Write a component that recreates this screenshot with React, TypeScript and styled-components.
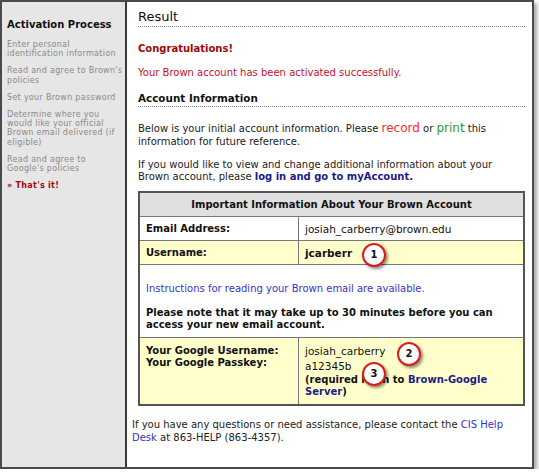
import React from 'react'
import styled, { createGlobalStyle } from 'styled-components'

const GlobalStyle = createGlobalStyle`
  html, body {
    margin: 0;
    padding: 0;
    background: #ffffff;
  }
  body {
    font-family: "DejaVu Sans", Verdana, sans-serif;
  }
`

const Frame = styled.div`
  display: flex;
  width: 534px;
  height: 469px;
  box-sizing: border-box;
  border: 2px solid #4a4a4a;
  box-shadow: 3px 3px 4px rgba(0, 0, 0, 0.35);
  overflow: hidden;
`

const Sidebar = styled.nav`
  flex: none;
  width: 125px;
  box-sizing: border-box;
  background: #e6e6e6;
  border-right: 2px solid #3a3a3a;
  padding: 16px 0 0 5px;
`

const SideTitle = styled.h3`
  margin: 0 0 9px;
  font-size: 10px;
  line-height: 13px;
  font-weight: bold;
  color: #111;
`

const SideStep = styled.div<{ $current?: boolean }>`
  margin-bottom: 7.5px;
  font-size: 8px;
  line-height: 9.4px;
  letter-spacing: 0.3px;
  color: ${({ $current }) => ($current ? '#9b0a0a' : '#8a8a8a')};
  font-weight: ${({ $current }) => ($current ? 'bold' : 'normal')};
`

const Main = styled.main`
  flex: 1;
  padding: 7px 7px 0 11px;
  color: #222;
  font-size: 10px;
`

const PageTitle = styled.h1`
  margin: 0;
  padding-bottom: 1px;
  font-size: 13px;
  line-height: 16px;
  font-weight: normal;
  color: #111;
  border-bottom: 1px dotted #8a8a8a;
`

const SectionTitle = styled.h2`
  margin: 13px 0 0;
  padding-bottom: 1px;
  font-size: 10.4px;
  line-height: 13px;
  font-weight: bold;
  color: #111;
  border-bottom: 1px dotted #8a8a8a;
`

const Para = styled.p<{ $mt: number; $lh?: number; $color?: string; $bold?: boolean }>`
  margin: ${({ $mt }) => $mt}px 0 0;
  line-height: ${({ $lh }) => $lh ?? 12}px;
  color: ${({ $color }) => $color ?? '#222'};
  font-weight: ${({ $bold }) => ($bold ? 'bold' : 'normal')};
`

const BigWord = styled.span<{ $color: string }>`
  font-size: 12px;
  color: ${({ $color }) => $color};
`

const Link = styled.a<{ $bold?: boolean }>`
  color: ${({ $bold }) => ($bold ? '#1c1c8c' : '#3333bb')};
  font-weight: ${({ $bold }) => ($bold ? 'bold' : 'normal')};
  text-decoration: none;
`

const InfoTable = styled.table`
  width: 100%;
  margin-top: 8px;
  border-collapse: collapse;
  border: 2px solid #555;
  font-size: 10px;
  color: #111;
`

const HeadCell = styled.th`
  height: 23px;
  padding: 0;
  background: #e0e0e0;
  border: 1px solid #777;
  font-weight: bold;
  text-align: center;
`

const Row = styled.tr<{ $yellow?: boolean }>`
  background: ${({ $yellow }) => ($yellow ? '#ffffcc' : '#ffffff')};
`

const LabelCell = styled.td<{ $top?: boolean }>`
  width: 146px;
  height: 23px;
  padding: ${({ $top }) => ($top ? '7px 6px 0' : '0 6px')};
  vertical-align: ${({ $top }) => ($top ? 'top' : 'middle')};
  border: 1px solid #777;
  font-weight: bold;
  line-height: 12px;
`

const ValueCell = styled.td<{ $top?: boolean }>`
  position: relative;
  padding: ${({ $top }) => ($top ? '5px 6px 7px' : '0 6px')};
  vertical-align: ${({ $top }) => ($top ? 'top' : 'middle')};
  border: 1px solid #777;
  line-height: 12px;
`

const WideCell = styled.td`
  padding: 18px 6px 7px;
  border: 1px solid #777;
`

const ValueText = styled.div<{ $bold?: boolean; $lh?: number }>`
  font-size: 10.5px;
  line-height: ${({ $lh }) => $lh ?? 12}px;
  font-weight: ${({ $bold }) => ($bold ? 'bold' : 'normal')};
`

const Note = styled.div`
  font-weight: bold;
  line-height: 11.5px;
`

const Marker = styled.span<{ $left: number; $top: number }>`
  position: absolute;
  left: ${({ $left }) => $left}px;
  top: ${({ $top }) => $top}px;
  width: 20px;
  height: 20px;
  border: 2.5px solid #e01b1b;
  border-radius: 50%;
  background: #ffffff;
  box-shadow: 2px 2px 3px rgba(0, 0, 0, 0.45);
  display: flex;
  align-items: center;
  justify-content: center;
  font-size: 10px;
  font-weight: bold;
  color: #111;
`

const Footer = styled.p`
  margin: 12px 0 0 -6px;
  line-height: 13px;
  color: #222;
`

const steps = [
  'Enter personal identification information',
  "Read and agree to Brown's policies",
  'Set your Brown password',
  'Determine where you would like your official Brown email delivered (if eligible)',
  "Read and agree to Google's policies",
]

export default function App() {
  return (
    <>
      <GlobalStyle />
      <Frame>
        <Sidebar>
          <SideTitle>Activation Process</SideTitle>
          {steps.map((s) => (
            <SideStep key={s}>{s}</SideStep>
          ))}
          <SideStep $current>» That's it!</SideStep>
        </Sidebar>
        <Main>
          <PageTitle>Result</PageTitle>
          <Para $mt={16} $color="#9b0a0a" $bold>
            Congratulations!
          </Para>
          <Para $mt={12} $color="#c4122b">
            Your Brown account has been activated successfully.
          </Para>
          <SectionTitle>Account Information</SectionTitle>
          <Para $mt={15} $lh={13}>
            Below is your initial account information. Please <BigWord $color="#ff2a2a">record</BigWord> or{' '}
            <BigWord $color="#2e9a2e">print</BigWord> this information for future reference.
          </Para>
          <Para $mt={11}>
            If you would like to view and change additional information about your Brown account, please{' '}
            <Link $bold>log in and go to myAccount.</Link>
          </Para>
          <InfoTable>
            <thead>
              <tr>
                <HeadCell colSpan={2}>Important Information About Your Brown Account</HeadCell>
              </tr>
            </thead>
            <tbody>
              <Row>
                <LabelCell>Email Address:</LabelCell>
                <ValueCell>
                  <ValueText>josiah_carberry@brown.edu</ValueText>
                </ValueCell>
              </Row>
              <Row $yellow>
                <LabelCell>Username:</LabelCell>
                <ValueCell>
                  <ValueText $bold>jcarberr</ValueText>
                  <Marker $left={63} $top={2}>1</Marker>
                </ValueCell>
              </Row>
              <Row>
                <WideCell colSpan={2}>
                  <Para $mt={0} $color="#3535c8">
                    Instructions for reading your Brown email are available.
                  </Para>
                  <Para $mt={12} $lh={11.5} $bold $color="#111">
                    Please note that it may take up to 30 minutes before you can access your new email account.
                  </Para>
                </WideCell>
              </Row>
              <Row $yellow>
                <LabelCell $top>
                  Your Google Username:
                  <br />
                  Your Google Passkey:
                </LabelCell>
                <ValueCell $top>
                  <ValueText $lh={16}>josiah_carberry</ValueText>
                  <ValueText $lh={15}>a12345b</ValueText>
                  <Note>
                    (required login to <Link $bold>Brown-Google Server</Link>)
                  </Note>
                  <Marker $left={98} $top={4}>2</Marker>
                  <Marker $left={63} $top={24}>3</Marker>
                </ValueCell>
              </Row>
            </tbody>
          </InfoTable>
          <Footer>
            If you have any questions or need assistance, please contact the <Link>CIS Help Desk</Link> at 863-HELP
            (863-4357).
          </Footer>
        </Main>
      </Frame>
    </>
  )
}
